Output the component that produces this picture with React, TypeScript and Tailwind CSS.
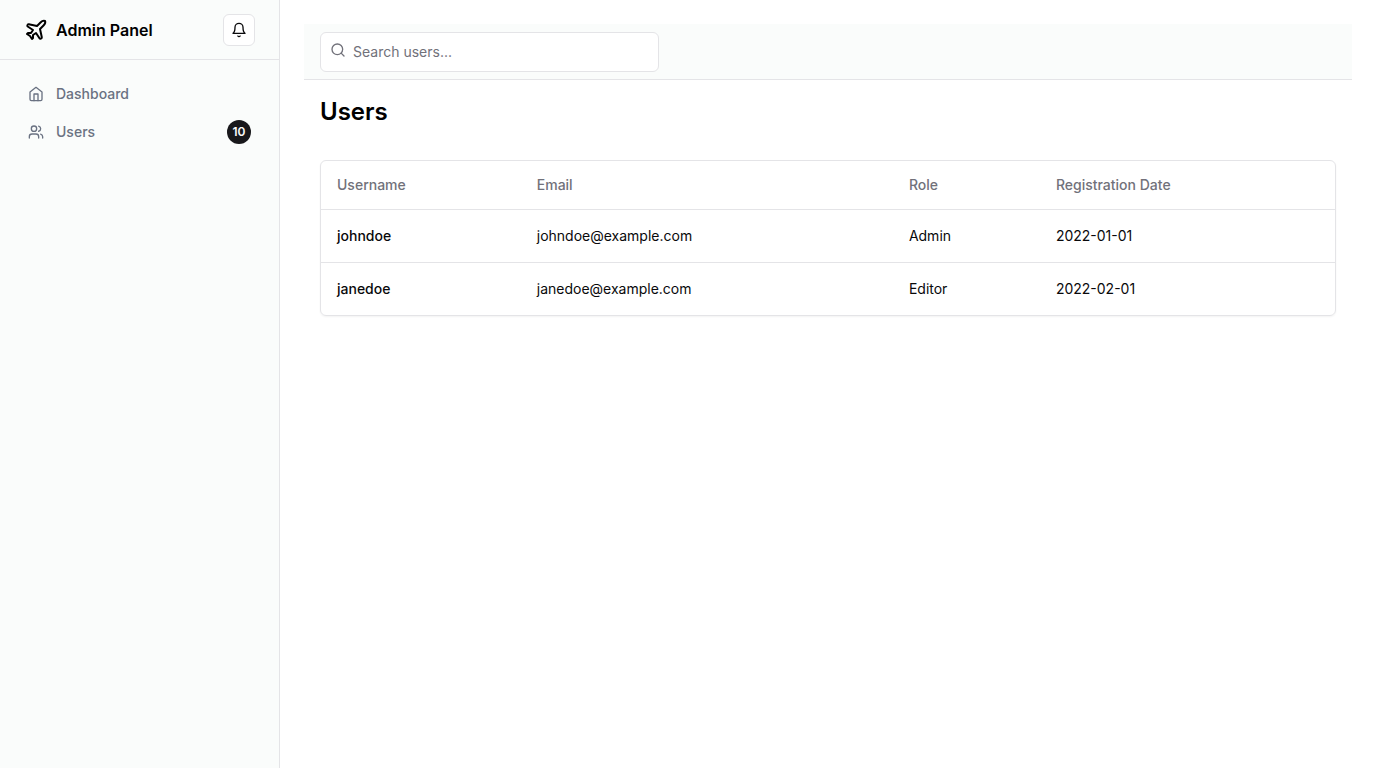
import type { ReactNode } from "react";

type IconProps = { className?: string; children: ReactNode };

function Icon({ className, children }: IconProps) {
  return (
    <svg
      aria-hidden="true"
      className={className}
      viewBox="0 0 24 24"
      fill="none"
      stroke="currentColor"
      strokeWidth="2"
      strokeLinecap="round"
      strokeLinejoin="round"
    >
      {children}
    </svg>
  );
}

const users = [
  { username: "johndoe", email: "johndoe@example.com", role: "Admin", date: "2022-01-01" },
  { username: "janedoe", email: "janedoe@example.com", role: "Editor", date: "2022-02-01" },
];

const columns = [
  { label: "Username", width: "w-[19.7%]" },
  { label: "Email", width: "w-[36.7%]" },
  { label: "Role", width: "w-[14.5%]" },
  { label: "Registration Date", width: "w-[29.1%]" },
];

function Sidebar() {
  return (
    <aside className="border-r border-[#e4e4e7] bg-[#fafcfb]">
      <div className="flex h-15 items-center border-b border-[#e4e4e7] px-6">
        <a href="#" className="flex items-center gap-2 font-semibold text-black">
          <Icon className="size-6">
            <path d="M17.8 19.2 16 11l3.5-3.5C21 6 21.5 4 21 3c-1-.5-3 0-4.5 1.5L13 8 4.8 6.2c-.5-.1-.9.1-1.1.5l-.3.5c-.2.5-.1 1 .3 1.3L9 12l-2 3H4l-1 1 3 2 2 3 1-1v-3l3-2 3.5 5.3c.3.4.8.5 1.3.3l.5-.2c.4-.3.6-.7.5-1.2z" />
          </Icon>
          <span>Admin Panel</span>
        </a>
        <button
          type="button"
          aria-label="Toggle notifications"
          className="ml-auto flex size-8 items-center justify-center rounded-md border border-[#e4e4e7] bg-white"
        >
          <Icon className="size-4">
            <path d="M6 8a6 6 0 0 1 12 0c0 7 3 9 3 9H3s3-2 3-9" />
            <path d="M10.3 21a1.94 1.94 0 0 0 3.4 0" />
          </Icon>
        </button>
      </div>
      <nav className="px-4 py-4 text-sm font-medium text-gray-500">
        <a href="#" className="flex items-center gap-3 px-3 py-2">
          <Icon className="size-4">
            <path d="m3 9 9-7 9 7v11a2 2 0 0 1-2 2H5a2 2 0 0 1-2-2z" />
            <polyline points="9 22 9 12 15 12 15 22" />
          </Icon>
          Dashboard
        </a>
        <a href="#" className="flex items-center gap-3 px-3 py-2">
          <Icon className="size-4">
            <path d="M16 21v-2a4 4 0 0 0-4-4H6a4 4 0 0 0-4 4v2" />
            <circle cx="9" cy="7" r="4" />
            <path d="M22 21v-2a4 4 0 0 0-3-3.87" />
            <path d="M16 3.13a4 4 0 0 1 0 7.75" />
          </Icon>
          Users
          <span className="ml-auto flex size-6 items-center justify-center rounded-full bg-[#18181b] text-xs font-semibold text-[#fafafa]">
            10
          </span>
        </a>
      </nav>
    </aside>
  );
}

function UsersTable() {
  return (
    <div className="overflow-hidden rounded-md border border-[#e4e4e7] shadow-xs">
      <table className="w-full text-left text-sm">
        <thead>
          <tr className="border-b border-[#e4e4e7]">
            {columns.map(({ label, width }) => (
              <th
                key={label}
                scope="col"
                className={`${width} h-12 px-4 font-medium text-[#71717a]`}
              >
                {label}
              </th>
            ))}
          </tr>
        </thead>
        <tbody>
          {users.map((user) => (
            <tr key={user.username} className="border-b border-[#e4e4e7] last:border-0">
              <td className="p-4 font-medium">{user.username}</td>
              <td className="p-4">{user.email}</td>
              <td className="p-4">{user.role}</td>
              <td className="p-4">{user.date}</td>
            </tr>
          ))}
        </tbody>
      </table>
    </div>
  );
}

export default function App() {
  return (
    <div className="grid min-h-screen grid-cols-[280px_1fr] bg-white font-['Inter',sans-serif] text-[#09090b]">
      <Sidebar />
      <div className="p-6">
        <header className="flex h-14 items-center border-b border-[#e4e4e7] bg-[#fafcfb] px-4">
          <form className="w-full">
            <div className="relative w-1/3">
              <Icon className="absolute top-2.5 left-2.5 size-4 text-[#71717a]">
                <circle cx="11" cy="11" r="8" />
                <path d="m21 21-4.3-4.3" />
              </Icon>
              <input
                type="search"
                aria-label="Search users"
                placeholder="Search users..."
                className="block h-10 w-full rounded-md border border-[#e4e4e7] bg-white py-2 pr-3 pl-8 text-sm placeholder:text-[#71717a]"
              />
            </div>
          </form>
        </header>
        <main className="flex flex-col gap-8 p-4">
          <h1 className="text-2xl font-semibold text-black">Users</h1>
          <UsersTable />
        </main>
      </div>
    </div>
  );
}
